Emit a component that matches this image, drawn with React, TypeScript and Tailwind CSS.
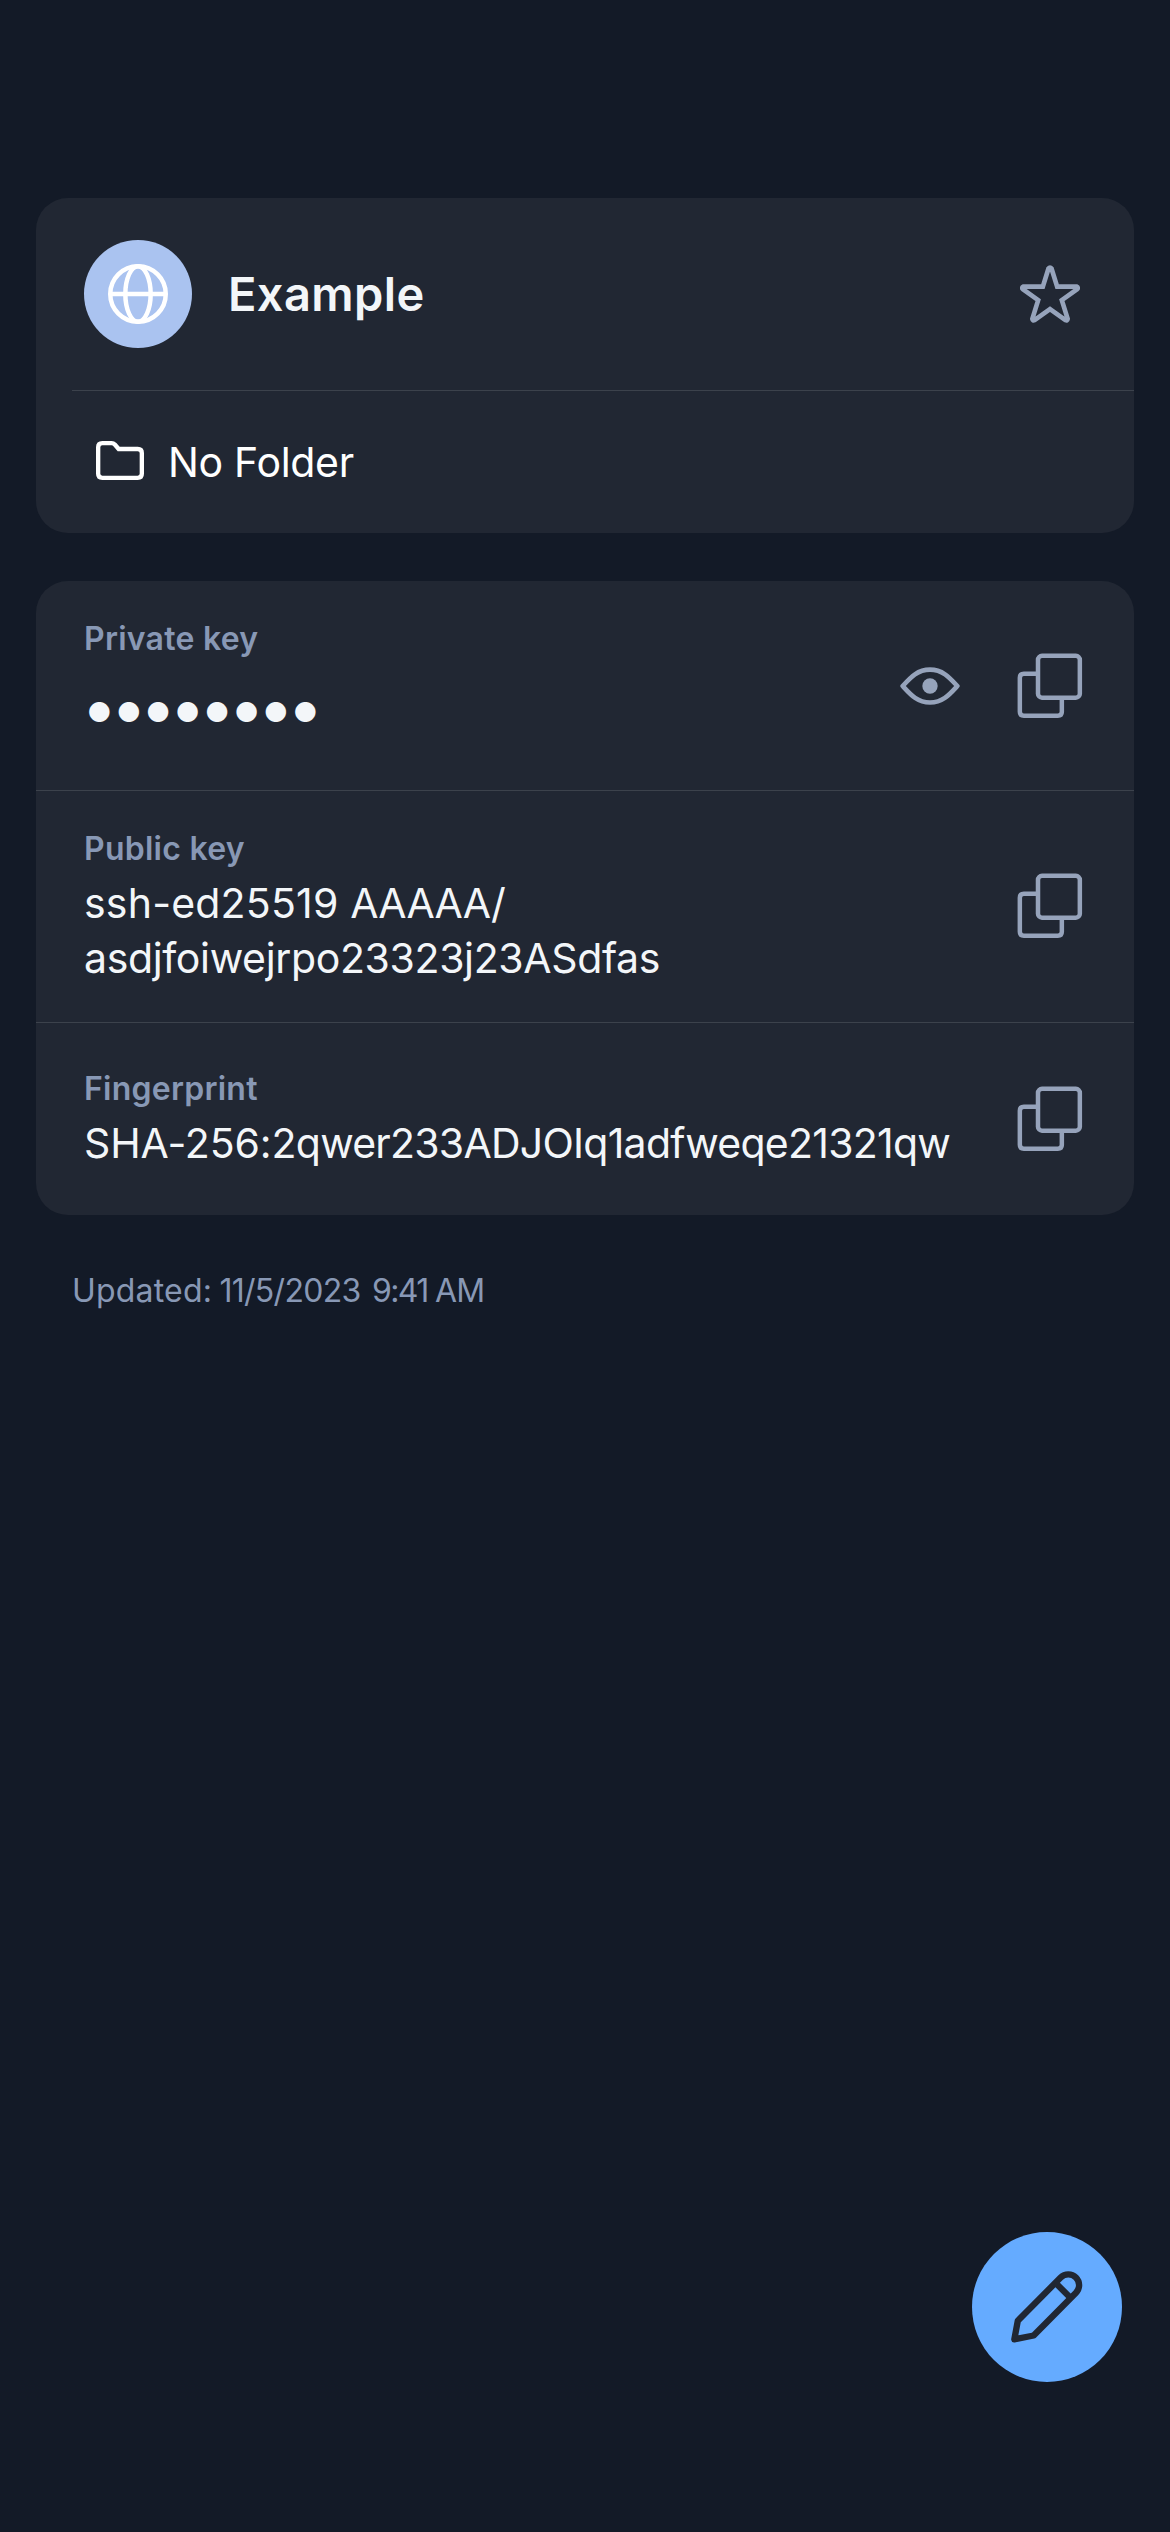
import type { ReactNode } from "react";

function GlobeIcon() {
  return (
    <svg className="size-[60px]" viewBox="0 0 180 180" fill="none" stroke="#fff" strokeWidth="13.5">
      <circle cx="90" cy="90" r="83.25" />
      <ellipse cx="90" cy="90" rx="38" ry="83.25" />
      <path d="M7 90h166" />
    </svg>
  );
}

function StarIcon() {
  return (
    <svg className="h-[60px] w-[60px]" viewBox="180 252 180 180" fill="none" stroke="#96A3BB" strokeWidth="14">
      <path d="M265.5 265.5Q270 260 274.5 265.5L291.5 320H350Q356 323 351.5 327.500L305.500 360.500L323 416.500Q322 422.500 316.500 420.500L270 387.500L223.500 420.500Q218 422.500 217 416.500L234.500 360.500L188.500 327.500Q184 323 190 320H248.500Z" />
    </svg>
  );
}

function FolderIcon() {
  return (
    <svg className="-mt-[3px] h-[39px] w-12" viewBox="228 783 144 117" fill="none" stroke="#fff" strokeWidth="13">
      <path d="M247 789.5H275Q280.500 789.500 284.500 793.500L296 807H353Q365.500 807 365.500 819V881.500Q365.500 893.500 353 893.500H247Q234.500 893.500 234.500 881.500V801.500Q234.500 789.500 247 789.500Z" />
    </svg>
  );
}

function EyeIcon() {
  return (
    <svg className="h-[60px] w-[60px]" viewBox="120 290 180 180" fill="none">
      <path
        d="M128 380C152 354 172 331 210 331S268 354 292 380C268 406 248 429.500 210 429.500S152 406 128 380Z"
        stroke="#96A3BB"
        strokeWidth="14"
        strokeLinejoin="round"
      />
      <circle cx="210" cy="380" r="23" fill="#96A3BB" />
    </svg>
  );
}

function CopyIcon() {
  return (
    <svg className="size-[66px]" viewBox="471.500 279.500 198 198" fill="none" stroke="#96A3BB" strokeWidth="13.5">
      <rect x="534.500" y="288" width="125.500" height="125.500" rx="12" />
      <path d="M534 342H492Q480 342 480 354V456Q480 468 492 468H594Q606 468 606 456V414" />
    </svg>
  );
}

function PencilIcon() {
  return (
    <svg className="size-[72px]" viewBox="212 212 216 216" fill="none" stroke="#212733" strokeWidth="19" strokeLinejoin="round">
      <path d="M222 417L232.500 361L361 231.500A32.200 32.200 0 0 1 407 277L280 405.500Z" />
      <path d="M346 248L391 293" />
    </svg>
  );
}

function Label({ children }: { children: ReactNode }) {
  return <div className="text-[32px] leading-[40px] font-semibold tracking-[0.25px] text-[#8898B5]">{children}</div>;
}

function Value({ children }: { children: ReactNode }) {
  return <div className="mt-[7px] text-[41px] leading-[55px] whitespace-nowrap text-[#F3F6F9]">{children}</div>;
}

export default function App() {
  return (
    <div className="flex h-[2532px] w-[1170px] flex-col bg-[#131A27] px-9 pt-[198px] font-['Inter',sans-serif]">
      <section className="h-[335px] overflow-hidden rounded-[32px] bg-[#212733]">
        <div className="flex h-48 items-center pr-[54px] pl-12">
          <div className="flex size-[108px] items-center justify-center rounded-full bg-[#AAC3F0]">
            <GlobeIcon />
          </div>
          <h1 className="ml-9 flex-1 text-[47px] leading-[60px] font-semibold tracking-[0.4px] text-[#F3F6F9]">Example</h1>
          <StarIcon />
        </div>
        <div className="ml-9 flex h-[143px] items-center gap-6 border-t border-[#3C424C] pl-6">
          <FolderIcon />
          <span className="text-[41px] leading-[55px] tracking-[-0.3px] text-white">No Folder</span>
        </div>
      </section>

      <section className="mt-12 h-[634px] overflow-hidden rounded-[32px] bg-[#212733]">
        <div className="flex h-[210px] justify-between border-b border-[#3C424C] pr-[51px] pl-12">
          <div className="pt-[38px]">
            <Label>Private key</Label>
            <div className="mt-[34px] ml-[3px] text-[27px] leading-10 tracking-[4.75px] text-[#F3F6F9]">●●●●●●●●</div>
          </div>
          <div className="flex items-center gap-[57px]">
            <EyeIcon />
            <CopyIcon />
          </div>
        </div>
        <div className="flex h-[232px] justify-between border-b border-[#3C424C] pr-[51px] pl-12">
          <div className="pt-[38px]">
            <Label>Public key</Label>
            <Value>
              <div className="tracking-[-0.8px]">
                <span className="tracking-[0.2px]">ssh-ed25519 </span>AAAAA/
              </div>
              <div className="tracking-[-0.36px]">asdjfoiwejrpo23323j23ASdfas</div>
            </Value>
          </div>
          <div className="flex items-center pb-px">
            <CopyIcon />
          </div>
        </div>
        <div className="flex h-48 justify-between pr-[51px] pl-12">
          <div className="pt-[46px]">
            <Label>Fingerprint</Label>
            <Value>
              <div className="tracking-[-0.75px]">
                <span className="tracking-[-0.1px]">SHA-256:</span>2qwer233ADJOIq1adfweqe21321qw
              </div>
            </Value>
          </div>
          <div className="flex items-center">
            <CopyIcon />
          </div>
        </div>
      </section>

      <p className="mt-[56px] ml-9 text-[32px] leading-[40px] whitespace-pre text-[#8898B5]">
        <span className="tracking-[0.2px] [word-spacing:-2px]">Updated: </span>
        <span className="tracking-[-0.7px] [word-spacing:3px]">11/5/2023 </span>
        <span className="tracking-[-1.6px]">9:41 </span>
        <span className="tracking-[-0.8px]">AM</span>
      </p>

      <button className="mt-auto mr-3 mb-[150px] flex size-[150px] items-center justify-center self-end rounded-full bg-[#65ABFF]">
        <PencilIcon />
      </button>
    </div>
  );
}
